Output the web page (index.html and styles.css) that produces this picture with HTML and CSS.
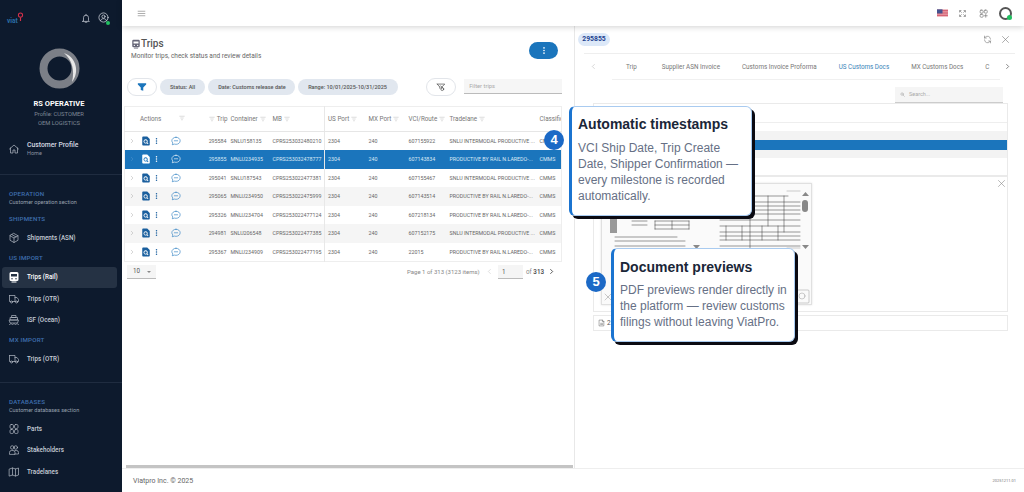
FILE: index.html
```html
<!DOCTYPE html>
<html lang="en">
<head>
<meta charset="utf-8">
<title>Viatpro - Trips</title>
<link rel="stylesheet" href="styles.css">
</head>
<body>

<svg class="defs" width="0" height="0">
  <symbol id="i-home" viewBox="0 0 24 24"><path d="M3 12l9-8 9 8M5 10v10h5v-6h4v6h5V10"/></symbol>
  <symbol id="i-box" viewBox="0 0 24 24"><path d="M12 3l8 4.500v9L12 21l-8-4.500v-9zM4 7.500l8 4.500 8-4.500M12 12v9M8 5.300l8 4.500"/></symbol>
  <symbol id="i-train" viewBox="0 0 24 24"><path class="solid" d="M6 2h12a3 3 0 0 1 3 3v12a3 3 0 0 1-3 3H6a3 3 0 0 1-3-3V5a3 3 0 0 1 3-3zm0 4v5h12V6zm2 8a1.500 1.500 0 1 0 0 3 1.500 1.500 0 0 0 0-3zm8 0a1.500 1.500 0 1 0 0 3 1.500 1.500 0 0 0 0-3zM7 21h10v2H7z"/></symbol>
  <symbol id="i-truck" viewBox="0 0 24 24"><path d="M3 5h11v12H9M5 17H3V5M14 9h4l3 4v4h-2M15 17h-1"/><circle cx="7" cy="18" r="2"/><circle cx="17" cy="18" r="2"/></symbol>
  <symbol id="i-ship" viewBox="0 0 24 24"><path d="M8 3h8v4H8zM5 7h14v5H5zM3 12h18l-2 6H5zM3 21c3-2 3-2 6 0 3-2 3-2 6 0 3-2 3-2 6 0"/></symbol>
  <symbol id="i-parts" viewBox="0 0 24 24"><rect x="4" y="3" width="7" height="8" rx="2.500"/><rect x="13" y="3" width="7" height="8" rx="2.500"/><rect x="4" y="13" width="7" height="8" rx="2.500"/><rect x="13" y="13" width="7" height="8" rx="2.500"/></symbol>
  <symbol id="i-people" viewBox="0 0 24 24"><circle cx="8.500" cy="7" r="3.500"/><circle cx="15.500" cy="7" r="3.500"/><path d="M3 20v-3a4 4 0 0 1 4-4h3a4 4 0 0 1 4 4v3zM14 20h7v-3a4 4 0 0 0-4-4h-3"/></symbol>
  <symbol id="i-map" viewBox="0 0 24 24"><path d="M3 6l6-2 6 2 6-2v14l-6 2-6-2-6 2zM9 4v14M15 6v14"/></symbol>
  <symbol id="i-doc" viewBox="0 0 24 24"><path class="solid" fill-rule="evenodd" d="M5 1h10l6 6v14a2 2 0 0 1-2 2H5a2 2 0 0 1-2-2V3a2 2 0 0 1 2-2zm6 7a5 5 0 1 0 2.900 9.100l2.500 2.500 1.500-1.500-2.500-2.500A5 5 0 0 0 11 8zm0 2a3 3 0 1 1 0 6 3 3 0 0 1 0-6z"/></symbol>
  <symbol id="i-chat" viewBox="0 0 24 24"><path d="M12 3c5.500 0 10 3.700 10 8.500S17.500 20 12 20c-1.300 0-2.500-.2-3.600-.6L3 21l1.500-4.300C3 15.300 2 13.500 2 11.500 2 6.700 6.500 3 12 3z"/><path d="M8 11.500h8"/></symbol>
  <symbol id="i-filter" viewBox="0 0 24 24"><path d="M3 5h18M7 12h10M10 19h4"/></symbol>
  <symbol id="i-x" viewBox="0 0 24 24"><path d="M4 4l16 16M20 4L4 20"/></symbol>
  <symbol id="i-left" viewBox="0 0 24 24"><path d="M15 5l-7 7 7 7"/></symbol>
  <symbol id="i-right" viewBox="0 0 24 24"><path d="M9 5l7 7-7 7"/></symbol>
  <symbol id="i-dots" viewBox="0 0 8 24"><circle class="solid" cx="4" cy="5" r="2.200"/><circle class="solid" cx="4" cy="12" r="2.200"/><circle class="solid" cx="4" cy="19" r="2.200"/></symbol>
</svg>

<aside class="sidebar">
  <div class="side-top">
    <span class="logo">viat<svg class="logo-pin" viewBox="0 0 10 12"><circle cx="5" cy="4" r="3" fill="none" stroke="#d5304a" stroke-width="1.500"/><path d="M5 8v4" stroke="#d5304a"/></svg></span>
    <svg class="top-bell" viewBox="0 0 24 24"><path d="M6 17V10a6 6 0 0 1 12 0v7l2 2H4zM10 21h4M12 2v2"/></svg>
    <span class="top-user">
      <svg viewBox="0 0 24 24"><circle cx="12" cy="12" r="10"/><circle cx="12" cy="10" r="3.500"/><path d="M5.500 19c1-3 3.500-4.500 6.500-4.500s5.500 1.500 6.500 4.500"/></svg>
      <i class="online"></i>
    </span>
  </div>

  <div class="profile">
    <svg class="avatar" viewBox="0 0 41 41"><circle cx="20.500" cy="20.500" r="16" fill="none" stroke="#7b7f87" stroke-width="8"/><path class="crescent" d="M25 5C37 9 41 24 33 34 36 22 33 12 25 5z"/></svg>
    <div class="profile-name">RS OPERATIVE</div>
    <div class="profile-line">Profile: CUSTOMER</div>
    <div class="profile-line">OEM LOGISTICS</div>
  </div>

  <a class="nav-item nav-home">
    <svg><use href="#i-home"/></svg>
    <span><b>Customer Profile</b><small>Home</small></span>
  </a>

  <hr class="side-rule">

  <div class="group-title first">OPERATION</div>
  <div class="group-sub">Customer operation section</div>
  <div class="group-title">SHIPMENTS</div>
  <a class="nav-item"><svg><use href="#i-box"/></svg><span>Shipments (ASN)</span></a>
  <div class="group-title">US IMPORT</div>
  <a class="nav-item active"><svg><use href="#i-train"/></svg><span>Trips (Rail)</span></a>
  <a class="nav-item"><svg><use href="#i-truck"/></svg><span>Trips (OTR)</span></a>
  <a class="nav-item"><svg><use href="#i-ship"/></svg><span>ISF (Ocean)</span></a>
  <div class="group-title">MX IMPORT</div>
  <a class="nav-item"><svg><use href="#i-truck"/></svg><span>Trips (OTR)</span></a>

  <hr class="side-rule low">

  <div class="group-title first">DATABASES</div>
  <div class="group-sub">Customer databases section</div>
  <a class="nav-item"><svg><use href="#i-parts"/></svg><span>Parts</span></a>
  <a class="nav-item"><svg><use href="#i-people"/></svg><span>Stakeholders</span></a>
  <a class="nav-item"><svg><use href="#i-map"/></svg><span>Tradelanes</span></a>
</aside>

<div class="main">
  <header class="topbar">
    <svg class="burger" viewBox="0 0 24 24"><path d="M3 6h18M3 12h18M3 18h18"/></svg>
    <span class="top-right">
      <svg class="flag" viewBox="0 0 12 8"><rect width="12" height="8" fill="#e9a0a8"/><path d="M0 1.500h12M0 4h12M0 6.500h12" stroke="#c9445a" stroke-width=".9"/><rect width="6" height="4.500" fill="#46538f"/></svg>
      <svg class="tool" viewBox="0 0 24 24"><path d="M4 8V4h4M16 4h4v4M20 16v4h-4M8 20H4v-4M9 9L6 6M15 9l3-3M15 15l3 3M9 15l-3 3"/></svg>
      <svg class="tool" viewBox="0 0 24 24"><rect x="3" y="3" width="8" height="8" rx="2.500"/><rect x="14" y="3" width="8" height="8" rx="2.500"/><rect x="3" y="14" width="8" height="8" rx="2.500"/><path d="M18 14v8M14 18h8"/></svg>
      <span class="user-ring"><i class="online"></i></span>
    </span>
  </header>

  <div class="split">
    <section class="trips">
      <div class="trips-head">
        <div>
          <h1><svg><use href="#i-train"/></svg>Trips</h1>
          <p>Monitor trips, check status and review details</p>
        </div>
        <button class="more-btn"><svg viewBox="0 0 8 24"><use href="#i-dots"/></svg></button>
      </div>

      <div class="filters">
        <button class="pill-btn"><svg viewBox="0 0 24 24"><path class="solid" d="M2 3h20v3l-7 7v8l-6-2v-6L2 6z"/></svg></button>
        <span class="chip">Status: All</span>
        <span class="chip">Date: Customs release date</span>
        <span class="chip">Range: 10/01/2025-10/31/2025</span>
        <button class="pill-btn alt"><svg viewBox="0 0 24 24"><path d="M3 5h18l-7 7v3M9 12L3 5M9 12v3"/><circle cx="15" cy="17" r="3.500"/><path d="M11 9l4 4"/></svg></button>
        <span class="filter-input">Filter trips</span>
      </div>

      <table class="grid">
        <thead>
          <tr>
            <th class="c-act"><span class="act-head">Actions<svg><use href="#i-filter"/></svg></span></th>
            <th class="c-trip"><svg><use href="#i-filter"/></svg>Trip</th>
            <th class="c-cont">Container<svg><use href="#i-filter"/></svg></th>
            <th class="c-mb">MB<svg><use href="#i-filter"/></svg></th>
            <th class="c-port">US Port<svg><use href="#i-filter"/></svg></th>
            <th class="c-mx">MX Port<svg><use href="#i-filter"/></svg></th>
            <th class="c-vci">VCI/Route<svg><use href="#i-filter"/></svg></th>
            <th class="c-lane">Tradelane<svg><use href="#i-filter"/></svg></th>
            <th class="c-class">Classification</th>
          </tr>
        </thead>
        <tbody>
          <tr>
            <td class="c-act"><span class="acts"><svg class="chev"><use href="#i-right"/></svg><svg class="doc"><use href="#i-doc"/></svg><svg class="dots"><use href="#i-dots"/></svg><svg class="chat"><use href="#i-chat"/></svg></span></td>
            <td class="c-trip">295584</td><td>SNLU158135</td><td>CPRS253032480210</td><td class="c-port">2304</td><td>240</td><td>607155922</td><td>SNLU INTERMODAL PRODUCTIVE ...</td><td>CMMS</td>
          </tr>
          <tr class="picked">
            <td class="c-act"><span class="acts"><svg class="chev"><use href="#i-right"/></svg><svg class="doc"><use href="#i-doc"/></svg><svg class="dots"><use href="#i-dots"/></svg><svg class="chat"><use href="#i-chat"/></svg></span></td>
            <td class="c-trip">295855</td><td>MNLU234935</td><td>CPRS253032478777</td><td class="c-port">2304</td><td>240</td><td>607143834</td><td>PRODUCTIVE BY RAIL N.LAREDO-...</td><td>CMMS</td>
          </tr>
          <tr>
            <td class="c-act"><span class="acts"><svg class="chev"><use href="#i-right"/></svg><svg class="doc"><use href="#i-doc"/></svg><svg class="dots"><use href="#i-dots"/></svg><svg class="chat"><use href="#i-chat"/></svg></span></td>
            <td class="c-trip">295041</td><td>SNLU187543</td><td>CPRS253022477381</td><td class="c-port">2304</td><td>240</td><td>607155467</td><td>SNLU INTERMODAL PRODUCTIVE ...</td><td>CMMS</td>
          </tr>
          <tr class="odd">
            <td class="c-act"><span class="acts"><svg class="chev"><use href="#i-right"/></svg><svg class="doc"><use href="#i-doc"/></svg><svg class="dots"><use href="#i-dots"/></svg><svg class="chat"><use href="#i-chat"/></svg></span></td>
            <td class="c-trip">295065</td><td>MNLU234950</td><td>CPRS253022475999</td><td class="c-port">2304</td><td>240</td><td>607143514</td><td>PRODUCTIVE BY RAIL N.LAREDO-...</td><td>CMMS</td>
          </tr>
          <tr>
            <td class="c-act"><span class="acts"><svg class="chev"><use href="#i-right"/></svg><svg class="doc"><use href="#i-doc"/></svg><svg class="dots"><use href="#i-dots"/></svg><svg class="chat"><use href="#i-chat"/></svg></span></td>
            <td class="c-trip">295326</td><td>MNLU234704</td><td>CPRS253022477124</td><td class="c-port">2304</td><td>240</td><td>607218134</td><td>PRODUCTIVE BY RAIL N.LAREDO-...</td><td>CMMS</td>
          </tr>
          <tr class="odd">
            <td class="c-act"><span class="acts"><svg class="chev"><use href="#i-right"/></svg><svg class="doc"><use href="#i-doc"/></svg><svg class="dots"><use href="#i-dots"/></svg><svg class="chat"><use href="#i-chat"/></svg></span></td>
            <td class="c-trip">294981</td><td>SNLU206548</td><td>CPRS253022477385</td><td class="c-port">2304</td><td>240</td><td>607152175</td><td>SNLU INTERMODAL PRODUCTIVE ...</td><td>CMMS</td>
          </tr>
          <tr>
            <td class="c-act"><span class="acts"><svg class="chev"><use href="#i-right"/></svg><svg class="doc"><use href="#i-doc"/></svg><svg class="dots"><use href="#i-dots"/></svg><svg class="chat"><use href="#i-chat"/></svg></span></td>
            <td class="c-trip">295367</td><td>MNLU234909</td><td>CPRS253022477195</td><td class="c-port">2304</td><td>240</td><td>22015</td><td>PRODUCTIVE BY RAIL N.LAREDO-...</td><td>CMMS</td>
          </tr>
        </tbody>
      </table>

      <div class="pager">
        <span class="page-size">10<i class="caret"></i></span>
        <span class="page-info">Page 1 of 313 (3123 items)</span>
        <svg class="page-arrow off"><use href="#i-left"/></svg>
        <span class="page-input">1</span>
        <span class="page-of">of <b>313</b></span>
        <svg class="page-arrow"><use href="#i-right"/></svg>
      </div>

      <div class="h-scroll"></div>
    </section>

    <section class="detail">
      <div class="detail-head">
        <span class="trip-chip">295855</span>
        <svg class="head-icon" viewBox="0 0 24 24"><path d="M20 11a8 8 0 0 0-14-5l-2 2M4 3v5h5M4 13a8 8 0 0 0 14 5l2-2M20 21v-5h-5"/></svg>
        <svg class="head-icon"><use href="#i-x"/></svg>
      </div>
      <hr class="detail-rule">
      <div class="tabs">
        <svg class="tab-arrow off"><use href="#i-left"/></svg>
        <div class="tab-list">
          <span>Trip</span>
          <span>Supplier ASN Invoice</span>
          <span>Customs Invoice Proforma</span>
          <span class="on">US Customs Docs</span>
          <span>MX Customs Docs</span>
          <span class="cut">C</span>
        </div>
        <svg class="tab-arrow"><use href="#i-right"/></svg>
      </div>
      <div class="doc-search">
        <span class="search-box">
          <svg viewBox="0 0 24 24"><circle cx="10" cy="10" r="6"/><path d="M15 15l6 6"/></svg>Search...
        </span>
      </div>
      <div class="doc-rows">
        <div class="doc-row tall"></div>
        <div class="doc-row thin"></div>
        <div class="doc-row grey"></div>
        <div class="doc-row blue"></div>
        <div class="doc-row grey low"></div>
        <div class="doc-row last"></div>
      </div>
      <div class="preview">
        <svg class="preview-x"><use href="#i-x"/></svg>
        <div class="preview-card">
          <svg viewBox="0 0 211 122" width="211" height="122">
            <g class="paper">
              <path d="M53 37h34M53 41h34M53 45h34M53 37v8M70 37v8M87 37v8M13 53h62M13 57h70M13 62h70M13 66h48M13 70h60M30 37h15M30 41h15"/>
              <path d="M118 12h68M118 18h80M118 22h80M118 26h80M118 30h80M118 36h80M118 42h80M118 48h80M118 52h80M118 56h80M118 62h80M148 5v62M166 12v30M182 12v36M124 42v14M140 42v14M160 42v14M176 42v14"/>
              <path class="hair" d="M185 7h13M130 70h30M185 64h13M120 8h25"/>
              <rect class="ink" x="8" y="33" width="7" height="16"/>
            </g>
            <path class="scroll" d="M91 61h7l-3.500 4zM200 12h7l-3.500-4zM200 61h7l-3.500 4z"/>
            <rect class="scroll" x="200" y="16" width="6" height="12" rx="3"/>
            <path class="hair2" d="M3 110l3 3M9 110l-3 3M3 116l3-3M9 116l-3-3"/>
            <rect class="hair2" x="194" y="106" width="13" height="13" rx="1"/>
            <circle class="hair2" cx="200" cy="112" r="3"/>
          </svg>
        </div>
      </div>
      <div class="file-row">
        <svg viewBox="0 0 24 24"><path d="M5 2h10l5 5v15H5zM15 2v5h5M9 13h7M9 17h7"/></svg>2
      </div>
    </section>
  </div>

  <footer class="footer">
    <span>Viatpro Inc. © 2025</span>
    <small>20251211.01</small>
  </footer>
</div>

<div class="tip tip-time">
  <h2>Automatic timestamps</h2>
  <p>VCI Ship Date, Trip Create Date, Shipper Confirmation — every milestone is recorded automatically.</p>
</div>
<span class="step step-4">4</span>

<div class="tip tip-docs">
  <h2>Document previews</h2>
  <p>PDF previews render directly in the platform — review customs filings without leaving ViatPro.</p>
</div>
<span class="step step-5">5</span>

</body>
</html>
```

FILE: styles.css
```css
* {box-sizing:border-box;margin:0;padding:0;}
html, body {width:1024px;height:492px;overflow:hidden;}
body {display:flex;background:#fff;font-family:Roboto,sans-serif;color:#666;position:relative;}
svg {fill:none;stroke:currentColor;stroke-width:1.6;stroke-linecap:round;stroke-linejoin:round;}
.solid {fill:currentColor;stroke:none;}
.defs {position:absolute;}

/* sidebar */
.sidebar {width:122px;height:492px;flex:none;background:#0d1a2d;color:#d5dae2;}
.side-top {height:36px;padding:12px 13px 0 7px;display:flex;align-items:flex-start;}
.logo {font-size:6.500px;font-weight:700;color:#2a6ea8;line-height:12px;margin-top:3px;position:relative;width:16px;}
.logo-pin {position:absolute;left:10px;top:-3px;width:7px;height:9px;}
.top-bell {width:10px;height:11px;margin:1px 0 0 auto;}
.top-user {width:11px;height:11px;margin-left:7px;position:relative;}
.top-user svg {width:11px;height:11px;display:block;}
.online {position:absolute;width:4px;height:4px;border-radius:50%;background:#20c060;right:-1px;bottom:-2px;}

.profile {text-align:center;width:118px;}
.avatar {display:block;width:41px;height:41px;margin:12px auto 0;}
.crescent {fill:#e8e8e8;stroke:none;}
.profile-name {font-size:7.500px;font-weight:700;color:#fff;margin-top:10px;line-height:10px;}
.profile-line {font-size:5.800px;color:#7f8896;line-height:9px;}
.profile-name + .profile-line {margin-top:1px;}

.nav-item {display:flex;align-items:center;height:21.700px;margin:0 5px 0 2px;padding-left:6px;font-size:6.300px;font-weight:500;color:#c6ccd6;}
.nav-item svg {width:12px;height:12px;flex:none;margin-right:7px;color:#b5bbc6;stroke-width:1.400;}
.nav-item b {display:block;font-size:6.800px;font-weight:500;color:#d5dae2;line-height:8px;}
.nav-item small {display:block;font-size:5.500px;font-weight:400;color:#8a93a1;line-height:8px;}
.nav-home {margin-top:10px;height:22px;}
.group-title + .nav-item {margin-top:4px;}
.group-sub + .nav-item {margin-top:4px;}
.group-title + .nav-item.active {margin-top:5px;background:#253244;border-radius:3px;height:21px;color:#fff;}
.nav-item.active svg {color:#fff;}
.side-rule {border:0;border-top:1px solid #1f2c40;margin-top:14px;}
.side-rule.low {margin-top:12px;}
.group-title {font-size:6.200px;font-weight:500;color:#3f6fb0;line-height:8px;padding-left:9px;margin-top:5px;letter-spacing:.2px;}
.group-title.first {margin-top:15px;}
.group-sub {font-size:5.500px;color:#98a1ae;line-height:8px;padding-left:9px;margin-bottom:1px;}
.group-sub + .group-title {margin-top:9px;}

/* main column */
.main {flex:1;display:flex;flex-direction:column;height:492px;min-width:0;}
.topbar {height:26px;flex:none;display:flex;align-items:center;padding:0 12px 0 15px;background:#fff;box-shadow:0 1px 6px rgba(0,0,0,.18);position:relative;color:#777;}
.burger {width:9px;height:9px;}
.top-right {margin-left:auto;display:flex;align-items:center;}
.flag {width:11px;height:8px;stroke:none;margin-right:10px;}
.tool {width:9px;height:9px;margin-right:12px;color:#666;}
.tool + .tool {margin-right:11px;}
.user-ring {width:13px;height:13px;border-radius:50%;border:2.500px solid #555;position:relative;display:block;}
.user-ring .online {right:-2px;bottom:-2px;width:5px;height:5px;}
.split {flex:1;display:flex;min-height:0;}

/* trips panel */
.trips {width:452px;flex:none;padding:0 12px 0 3px;display:flex;flex-direction:column;position:relative;}
.trips-head {display:flex;justify-content:space-between;padding:11px 4px 0 6px;height:52px;}
.trips-head h1 {font-size:10px;font-weight:500;color:#555;line-height:13px;display:flex;align-items:center;}
.trips-head h1 svg {width:10px;height:12px;margin-right:0;color:#667;}
.trips-head p {font-size:6.500px;color:#666;line-height:9px;margin-top:2px;}
.more-btn {width:29px;height:17px;margin-top:5px;border:0;border-radius:9px;background:#1b75bc;color:#fff;display:flex;align-items:center;justify-content:center;}
.more-btn svg {width:4px;height:9px;}
.filters {display:flex;align-items:center;height:17px;padding-left:2px;}
.chip {height:16px;border-radius:8px;background:#e1e7ef;font-size:5.500px;font-weight:500;color:#555;line-height:16px;padding:0 10px;margin-left:3px;white-space:nowrap;}
.chip:nth-child(3) {width:87px;}
.chip:nth-child(4) {width:100px;}
.pill-btn {width:30px;height:18px;border-radius:9px;border:1px solid #e2e5ea;background:#fff;display:flex;align-items:center;justify-content:center;color:#1b75bc;}
.pill-btn svg {width:10px;height:10px;}
.pill-btn.alt {margin-left:28px;color:#444;}
.filter-input {flex:1;height:15px;margin-left:8px;background:#f6f6f6;border-bottom:1px solid #bbb;font-size:5.800px;color:#aaa;line-height:14px;padding-left:5px;}

.grid {table-layout:fixed;width:437px;border-collapse:collapse;margin:11px 0 0 -1px;border:1px solid #eee;font-size:5.300px;}
.grid th {height:25px;font-weight:400;font-size:6.300px;color:#777;text-align:left;padding-left:3px;white-space:nowrap;overflow:hidden;border-bottom:1px solid #e6e6e6;}
.grid th svg {width:6px;height:6px;margin-left:2px;vertical-align:-1px;color:#aaa;}
.grid td {height:18.500px;padding:0 0 0 3px;white-space:nowrap;overflow:hidden;color:#666;}
.grid .c-act {width:80px;padding-left:0;}
.grid .c-trip {width:23px;padding:0 1px 0 0;text-align:right;}
.grid th.c-trip svg {margin:0 2px 0 0;}
.grid .c-cont {width:42px;}
.grid .c-mb {width:55px;}
.grid .c-port {width:41px;border-left:1px solid #e8e8e8;}
.grid .c-mx {width:40px;}
.grid .c-vci {width:41px;}
.grid .c-lane {width:90px;}
.grid .c-class {width:25px;}
.grid th:nth-child(2) {padding:0;overflow:visible;}
.act-head {padding-left:15px;display:flex;width:60px;justify-content:space-between;}
.acts {display:flex;align-items:center;padding-left:4px;color:#1a5f9e;}
.acts .chev {width:6px;height:6px;color:#999;}
.acts .doc {width:10px;height:10px;margin-left:6px;}
.acts .dots {width:3px;height:8px;margin-left:4px;}
.acts .chat {width:10px;height:10px;margin-left:13px;color:#2a7dc0;stroke-width:1.500;}
.grid tr.odd td {background:#f5f5f5;}
.grid tr.picked td {background:#1b75bc;color:#dbe9f5;}
.picked .acts {color:#fff;}
.picked .acts .chat {color:#fff;}
.picked .acts .chev {color:#5fa0d4;}

.pager {display:flex;align-items:center;height:14px;margin:3px 0 0 2px;font-size:6px;color:#888;}
.page-size {width:29px;height:14px;background:#f5f5f5;border-bottom:1px solid #bbb;padding-left:6px;line-height:13px;color:#555;font-size:6.300px;position:relative;}
.caret {position:absolute;right:5px;top:6px;border:2px solid transparent;border-top-color:#888;border-bottom:0;}
.page-info {margin-left:251px;width:79px;}
.page-arrow {width:7px;height:7px;margin-left:0;color:#222;stroke-width:2.500;}
.page-arrow.off {color:#bbb;stroke-width:1.600;margin-right:5px;}
.page-input {width:25px;height:14px;background:#f5f5f5;border-bottom:1px solid #bbb;padding-left:4px;line-height:14px;color:#555;font-size:6.300px;}
.page-of {margin:0 4px 0 3px;font-size:6.300px;}
.page-of b {font-weight:500;color:#444;}
.h-scroll {position:absolute;left:4px;right:1px;bottom:0;height:3px;background:#c4c4c4;}

/* detail panel */
.detail {flex:1;border-left:1px solid #e8e8e8;padding:0 17px 0 1px;min-width:0;}
.detail-head {height:27px;display:flex;align-items:center;padding-left:2px;margin:0 -8px 0 0;}
.trip-chip {width:32px;height:13px;border-radius:7px;background:#dce8f8;color:#1c3f8f;font-size:6.800px;font-weight:700;text-align:center;line-height:13px;}
.head-icon {width:9px;height:9px;color:#777;}
.trip-chip + .head-icon {margin-left:auto;margin-right:9px;}
.detail-head .head-icon:last-child {margin-right:5px;}
.detail-rule {border:0;border-top:1px solid #eee;margin:0 -8px 0 8px;}
.tabs {display:flex;align-items:center;height:25px;margin-right:-4px;}
.tab-arrow {width:7px;height:7px;flex:none;color:#444;margin-left:4px;stroke-width:2.200;}
.tab-arrow.off {color:#aaa;margin:0 0 0 14px;stroke-width:1.600;}
.tab-list {flex:1;min-width:0;display:flex;height:24px;overflow:hidden;margin-left:15px;padding-left:2px;border-bottom:1px solid #f0f0f0;font-size:6.300px;color:#777;margin-top:2px;}
.tab-list span {padding:0 11px;line-height:23px;white-space:nowrap;height:24px;}
.tab-list span:first-child {padding:0 14px 0 12px;}
.tab-list .on {color:#3a83b8;border-bottom:1px solid #3a83b8;}
.doc-search {display:flex;justify-content:flex-end;padding-right:4px;height:20px;margin-top:-1px;position:relative;}
.search-box {width:108px;height:16px;background:#f5f5f5;border-bottom:1px solid #ccc;font-size:5.500px;color:#aaa;line-height:15px;padding-left:5px;display:flex;align-items:center;position:absolute;top:9px;}
.search-box svg {width:5px;height:5px;margin-right:4px;color:#777;}
.doc-rows {margin:5px 0 0 17px;height:73px;border:1px solid #eaeaea;display:flex;flex-direction:column;width:415px;}
.doc-row.tall {height:19px;border-bottom:1px solid #eee;}
.doc-row.thin {height:8px;}
.doc-row.grey {height:9px;background:#f3f3f3;}
.doc-row.blue {height:10px;background:#1b75bc;}
.doc-row.low {height:8px;}
.doc-row.last {flex:1;}
.preview {margin:0 0 0 17px;width:415px;height:136px;border:1px solid #eaeaea;position:relative;padding:6px 0 0 7px;}
.preview-x {position:absolute;right:1px;top:2px;width:9px;height:9px;color:#888;}
.preview-card {width:211px;height:122px;border:1px solid #e0e0e0;box-shadow:0 0 2px rgba(0,0,0,.12);background:#fafafa;}
.preview-card svg {display:block;stroke-width:.5;}
.paper {color:#333;}
.paper .hair {color:#999;}
.paper .ink {fill:#999;stroke:none;}
.scroll {fill:#888;stroke:none;}
.hair2 {color:#999;}
.file-row {margin:3px 0 0 17px;width:415px;height:16px;border:1px solid #eaeaea;display:flex;align-items:center;padding-left:4px;font-size:6.500px;color:#555;}
.file-row svg {width:7px;height:8px;margin-right:2px;}

.footer {height:24px;flex:none;display:flex;justify-content:space-between;align-items:center;padding:0 8px 0 11px;border-top:1px solid #eee;font-size:7px;color:#666;}
.footer small {font-size:4px;color:#777;}

/* overlays */
.tip {position:absolute;background:#fff;border:1px solid #a9cbf0;border-left:3px solid #1b74d0;border-radius:6px;box-shadow:3px 3px 0 #0a0a12;font-family:"Liberation Sans",sans-serif;padding:7px 5px 0 6px;}
.tip h2 {font-size:14px;font-weight:700;color:#1a2638;line-height:20px;}
.tip p {font-size:12px;line-height:16px;color:#667085;margin-top:6px;}
.tip-time {left:569px;top:106px;width:183px;height:110px;}
.tip-docs {left:611px;top:248px;width:184px;height:94px;padding-top:8px;}
.tip-docs p {margin-top:5px;}
.step {position:absolute;width:20px;height:20px;border-radius:50%;background:#1b69c6;color:#fff;font-family:"Liberation Sans",sans-serif;font-size:13px;font-weight:700;text-align:center;line-height:20px;}
.step-4 {left:544px;top:130px;}
.step-5 {left:586px;top:272px;}
```
